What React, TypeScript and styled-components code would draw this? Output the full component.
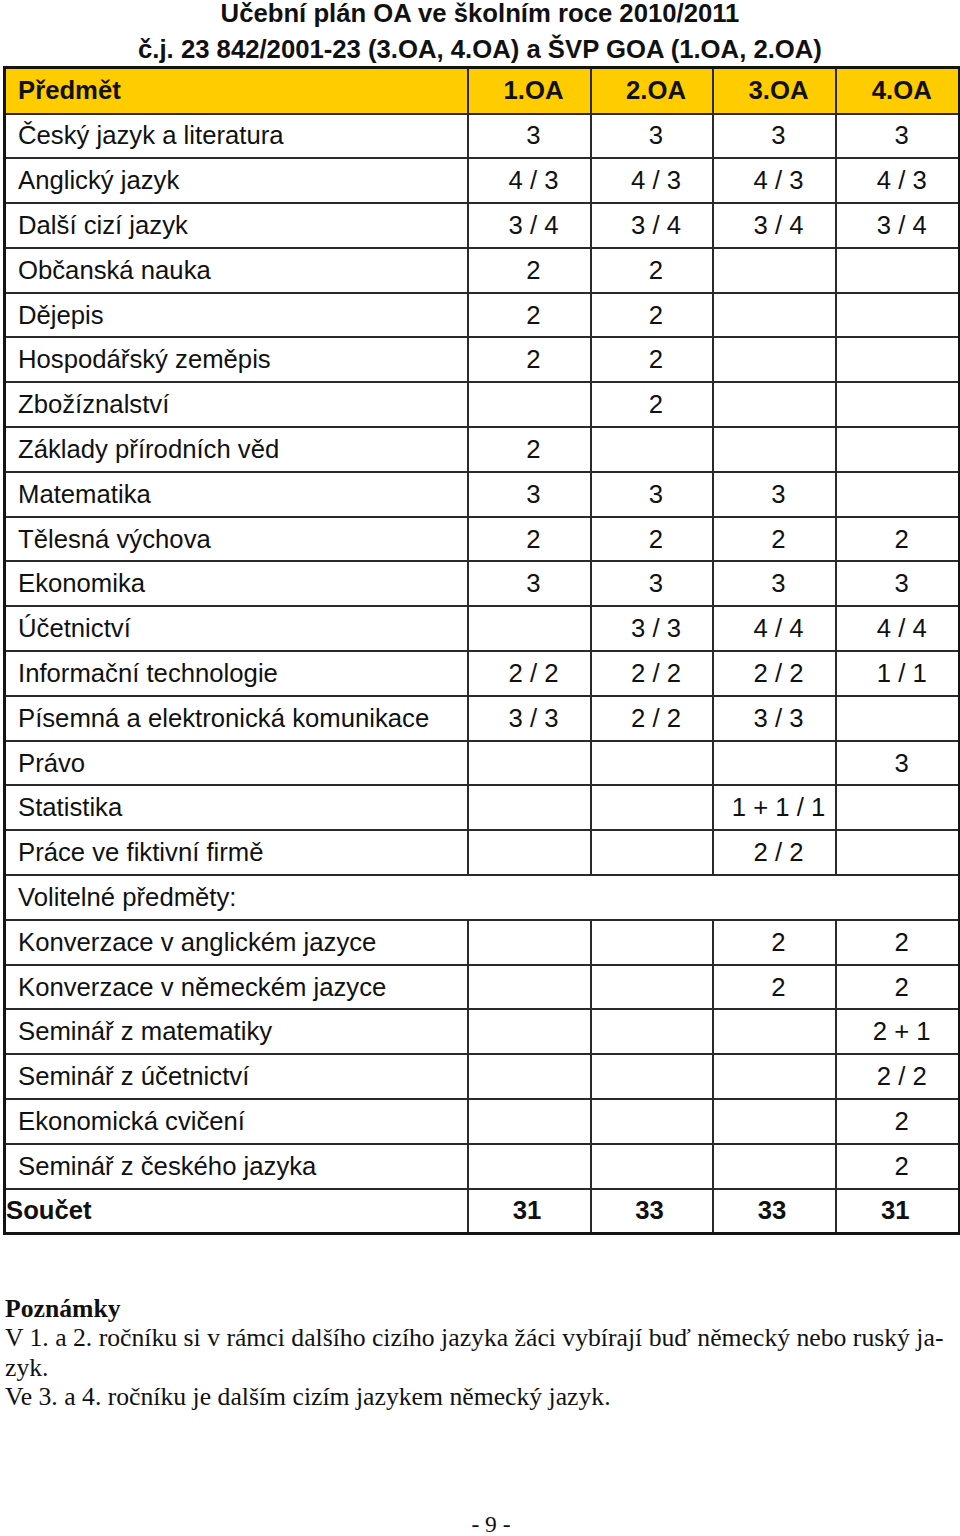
import styled, { createGlobalStyle } from 'styled-components'

type Cell = string

interface SubjectRow {
	name: string
	hours: Cell[]
}

const GlobalStyle = createGlobalStyle`
	html, body {
		margin: 0;
		padding: 0;
		background: #ffffff;
	}
	body {
		width: 960px;
		height: 1536px;
		color: #111111;
	}
`

const Page = styled.div`
	width: 960px;
	height: 1536px;
	display: flex;
	flex-direction: column;
	font-family: 'Liberation Sans', Arial, Helvetica, sans-serif;
`

const Title = styled.div`
	display: flex;
	flex-direction: column;
	align-items: center;
	gap: 10px;
	margin-bottom: 4px;
`

const TitleLine = styled.div`
	font-size: 25.7px;
	line-height: 26px;
	font-weight: 700;
	white-space: nowrap;
`

const Table = styled.table`
	margin-left: 3px;
	width: 955px;
	border-collapse: collapse;
	table-layout: fixed;
	border: 3px solid #141414;
`

const HeadRow = styled.tr`
	height: 46px;
	background: #ffcc00;
`

const BodyRow = styled.tr`
	height: 44.8px;
`

const NameCell = styled.td<{ $bold?: boolean; $flush?: boolean }>`
	border: 2px solid #2a2a2a;
	padding: 0 0 0 ${p => (p.$flush ? '0' : '12px')};
	font-size: 25.7px;
	font-weight: ${p => (p.$bold ? 700 : 400)};
	white-space: nowrap;
	text-align: left;
	overflow: hidden;
`

const HourCell = styled.td<{ $total?: boolean }>`
	border: 2px solid #2a2a2a;
	padding: ${p => (p.$total ? '0 4px 0 0' : '0 0 0 9px')};
	font-size: 25.7px;
	font-weight: ${p => (p.$total ? 700 : 400)};
	text-align: center;
	white-space: nowrap;
`

const HeadCell = styled(HourCell)`
	padding: 0 0 0 9px;
	font-weight: 700;
`

const Notes = styled.div`
	margin-top: 59px;
	padding-left: 5px;
	font-family: 'Liberation Serif', 'Times New Roman', serif;
	font-size: 25.7px;
	line-height: 29.5px;
	color: #111111;
`

const NotesTitle = styled.div`
	font-weight: 700;
`

const PageNumber = styled.div`
	margin-top: auto;
	padding: 0 0 0 22px;
	height: 23px;
	text-align: center;
	font-family: 'Liberation Serif', 'Times New Roman', serif;
	font-size: 23.5px;
	line-height: 22px;
`

const main: SubjectRow[] = [
	{ name: 'Český jazyk a literatura', hours: ['3', '3', '3', '3'] },
	{ name: 'Anglický jazyk', hours: ['4 / 3', '4 / 3', '4 / 3', '4 / 3'] },
	{ name: 'Další cizí jazyk', hours: ['3 / 4', '3 / 4', '3 / 4', '3 / 4'] },
	{ name: 'Občanská nauka', hours: ['2', '2', '', ''] },
	{ name: 'Dějepis', hours: ['2', '2', '', ''] },
	{ name: 'Hospodářský zeměpis', hours: ['2', '2', '', ''] },
	{ name: 'Zbožíznalství', hours: ['', '2', '', ''] },
	{ name: 'Základy přírodních věd', hours: ['2', '', '', ''] },
	{ name: 'Matematika', hours: ['3', '3', '3', ''] },
	{ name: 'Tělesná výchova', hours: ['2', '2', '2', '2'] },
	{ name: 'Ekonomika', hours: ['3', '3', '3', '3'] },
	{ name: 'Účetnictví', hours: ['', '3 / 3', '4 / 4', '4 / 4'] },
	{ name: 'Informační technologie', hours: ['2 / 2', '2 / 2', '2 / 2', '1 / 1'] },
	{ name: 'Písemná a elektronická komunikace', hours: ['3 / 3', '2 / 2', '3 / 3', ''] },
	{ name: 'Právo', hours: ['', '', '', '3'] },
	{ name: 'Statistika', hours: ['', '', '1 + 1 / 1', ''] },
	{ name: 'Práce ve fiktivní firmě', hours: ['', '', '2 / 2', ''] },
]

const optional: SubjectRow[] = [
	{ name: 'Konverzace v anglickém jazyce', hours: ['', '', '2', '2'] },
	{ name: 'Konverzace v německém jazyce', hours: ['', '', '2', '2'] },
	{ name: 'Seminář z matematiky', hours: ['', '', '', '2 + 1'] },
	{ name: 'Seminář z účetnictví', hours: ['', '', '', '2 / 2'] },
	{ name: 'Ekonomická cvičení', hours: ['', '', '', '2'] },
	{ name: 'Seminář z českého jazyka', hours: ['', '', '', '2'] },
]

const classes = ['1.OA', '2.OA', '3.OA', '4.OA']
const totals = ['31', '33', '33', '31']

const renderRow = (row: SubjectRow) => (
	<BodyRow key={row.name}>
		<NameCell>{row.name}</NameCell>
		{row.hours.map((h, i) => (
			<HourCell key={i}>{h}</HourCell>
		))}
	</BodyRow>
)

export default function App() {
	return (
		<Page>
			<GlobalStyle />
			<Title>
				<TitleLine>Učební plán OA ve školním roce 2010/2011</TitleLine>
				<TitleLine>č.j. 23 842/2001-23 (3.OA, 4.OA) a ŠVP GOA (1.OA, 2.OA)</TitleLine>
			</Title>
			<Table>
				<colgroup>
					<col style={{ width: 463 }} />
					<col style={{ width: 123 }} />
					<col style={{ width: 122 }} />
					<col style={{ width: 123 }} />
					<col style={{ width: 124 }} />
				</colgroup>
				<thead>
					<HeadRow>
						<NameCell $bold>Předmět</NameCell>
						{classes.map(c => (
							<HeadCell key={c}>{c}</HeadCell>
						))}
					</HeadRow>
				</thead>
				<tbody>
					{main.map(renderRow)}
					<BodyRow>
						<NameCell colSpan={5}>Volitelné předměty:</NameCell>
					</BodyRow>
					{optional.map(renderRow)}
					<BodyRow>
						<NameCell $bold $flush>
							Součet
						</NameCell>
						{totals.map((t, i) => (
							<HourCell key={i} $total>
								{t}
							</HourCell>
						))}
					</BodyRow>
				</tbody>
			</Table>
			<Notes>
				<NotesTitle>Poznámky</NotesTitle>
				<div>
					V 1. a 2. ročníku si v rámci dalšího cizího jazyka žáci vybírají buď německý nebo ruský ja-
				</div>
				<div>zyk.</div>
				<div>Ve 3. a 4. ročníku je dalším cizím jazykem německý jazyk.</div>
			</Notes>
			<PageNumber>- 9 -</PageNumber>
		</Page>
	)
}
